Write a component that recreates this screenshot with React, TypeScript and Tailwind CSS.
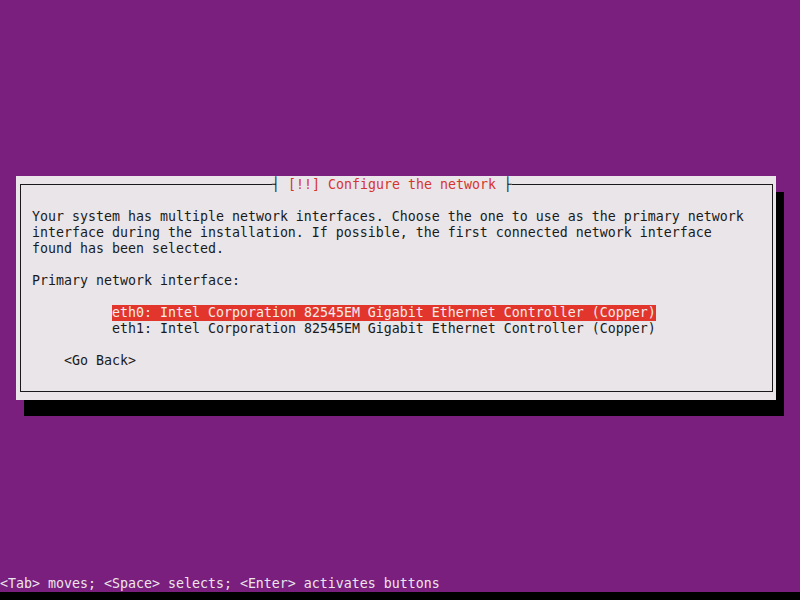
import React from 'react';

const mono = { fontFamily: '"DejaVu Sans Mono", "Liberation Mono", monospace' };

const intro = [
  'Your system has multiple network interfaces. Choose the one to use as the primary network',
  'interface during the installation. If possible, the first connected network interface',
  'found has been selected.',
];

const interfaces = [
  'eth0: Intel Corporation 82545EM Gigabit Ethernet Controller (Copper)',
  'eth1: Intel Corporation 82545EM Gigabit Ethernet Controller (Copper)',
];

export default function App() {
  return (
    <div
      className="w-[800px] h-[600px] flex flex-col bg-[#7a1f7e] text-[13.29px] leading-4 overflow-hidden"
      style={mono}
    >
      <div className="flex-1 pt-[176px] pl-4">
        <div className="relative w-[760px] h-[224px] bg-[#e9e5e9] pt-2 pl-1 shadow-[8px_16px_0_0_#000]">
          <div className="w-[753px] h-[208px] border border-[#1a1a1a] pt-[24px] pl-[11px] text-[#1a1a1a]">
            {intro.map((l) => (
              <div key={l} className="whitespace-pre h-4">{l}</div>
            ))}
            <div className="h-4" />
            <div className="whitespace-pre h-4">Primary network interface:</div>
            <div className="h-4" />
            <div className="pl-20">
              {interfaces.map((l, i) => (
                <div key={l} className="flex h-4">
                  <span
                    className={
                      i === 0
                        ? 'whitespace-pre bg-[#e2362c] text-[#f4ecec]'
                        : 'whitespace-pre'
                    }
                  >
                    {l}
                  </span>
                </div>
              ))}
            </div>
            <div className="h-4" />
            <div className="whitespace-pre h-4 pl-8">&lt;Go Back&gt;</div>
          </div>
          <div className="absolute top-px left-[256px] h-4 flex whitespace-pre bg-[#e9e5e9] text-[#1a1a1a]">
            <span>┤ </span>
            <span className="text-[#d6352d]">[!!] Configure the network</span>
            <span> ├</span>
          </div>
        </div>
      </div>
      <div className="h-4 whitespace-pre text-[#ece6ec]">
        &lt;Tab&gt; moves; &lt;Space&gt; selects; &lt;Enter&gt; activates buttons
      </div>
      <div className="h-2 bg-black" />
    </div>
  );
}
